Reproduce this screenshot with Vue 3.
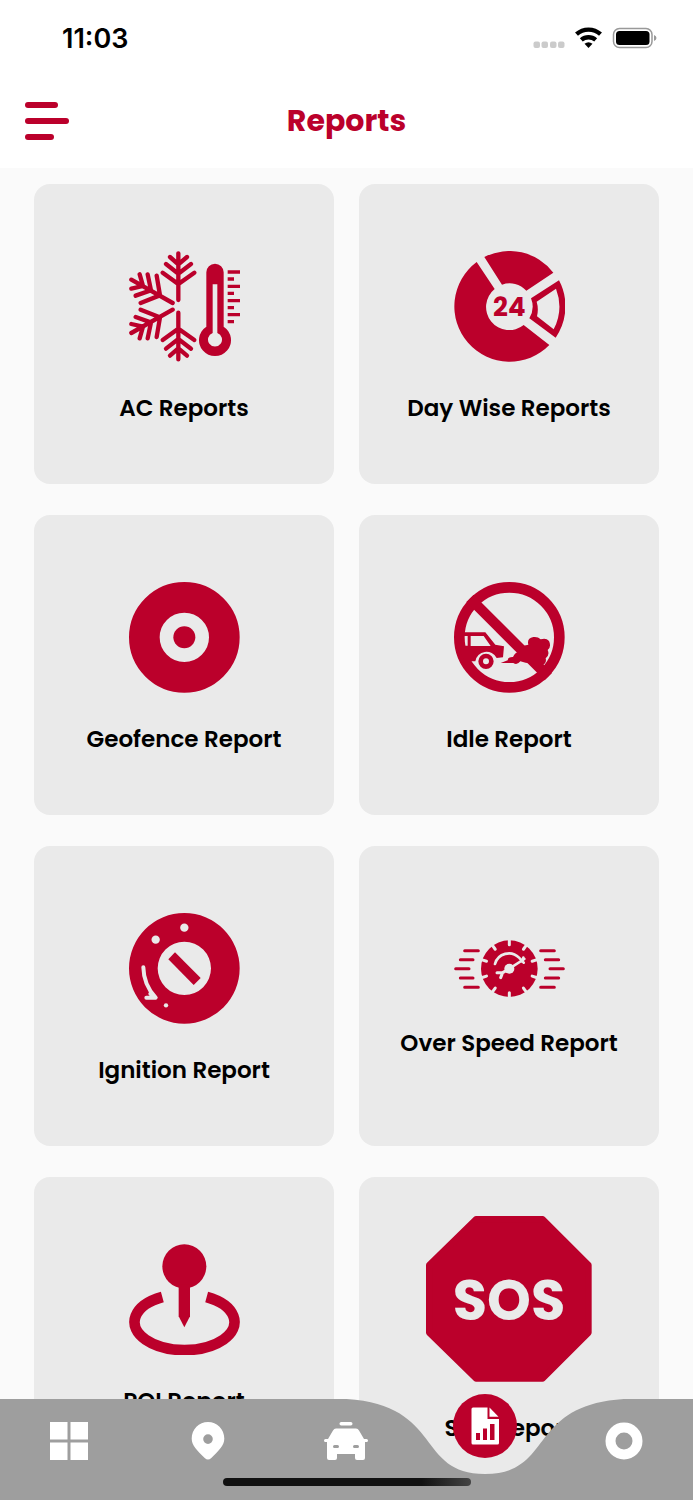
<template>
  <div class="screen">
    <div class="status-bar">
      <span class="status-time">11:03</span>
      <svg class="status-icons" viewBox="0 0 124 24" aria-hidden="true">
        <g fill="#cbcbcb">
          <rect x="0.5" y="15.5" width="6.5" height="6.5" rx="2" />
          <rect x="8.5" y="15.5" width="6.5" height="6.5" rx="2" />
          <rect x="17" y="15.5" width="6.5" height="6.5" rx="2" />
          <rect x="25" y="15.5" width="6.5" height="6.5" rx="2" />
        </g>
        <g fill="none" stroke="#000" stroke-width="4.4">
          <path d="M43.500 8.200A18 18 0 0 1 67.500 8.200" />
          <path d="M48.300 13.900A11 11 0 0 1 62.700 13.900" />
        </g>
        <path d="M51.500 17.800Q55.500 14.600 59.500 17.800L55.500 21.900Z" />
        <rect x="80.500" y="2.500" width="38.500" height="19" rx="6" fill="none" stroke="#999" stroke-width="1.500" />
        <rect x="83" y="5" width="33.500" height="14" rx="3.500" />
        <path d="M121 9Q123.500 10 123.500 12T121 15Z" fill="#999" />
      </svg>
    </div>

    <header class="app-header">
      <button type="button" class="menu-button" aria-label="Menu">
        <span class="menu-line"></span>
        <span class="menu-line menu-line--long"></span>
        <span class="menu-line menu-line--short"></span>
      </button>
      <h1 class="app-title">Reports</h1>
      <span></span>
    </header>

    <main class="report-grid">
      <a
        v-for="report in reports"
        :key="report.id"
        href="#"
        class="report-card"
        @click.prevent
      >
        <svg
          :class="['report-icon', `report-icon--${report.id}`]"
          :viewBox="report.viewBox"
          aria-hidden="true"
        >
          <template v-if="report.id === 'ac'">
            <g fill="none" stroke="#bb002b" stroke-width="13" stroke-linecap="round">
              <g v-for="side in ['', 'translate(0 400) scale(1 -1)']" :key="side" :transform="side">
                <path d="M203 41V181M156 99L203 133L251 99M166 73L203 102L241 73M178 52L203 74L229 52" />
                <path d="M62 120L186 190M138 108L148 167L90 190M111 104L121 152L75 168M87 104L97 139L62 147" />
              </g>
            </g>
            <path
              fill="#bb002b"
              fill-rule="evenodd"
              d="M287 98a26 26 0 0 1 52 0V261a48 48 0 1 1 -52 0ZM306 134V280a21 21 0 1 0 14 0V134Z"
            />
            <path
              stroke="#bb002b"
              stroke-width="10"
              d="M351 97H389M351 140H389M351 183H389M351 225H389M351 118H370M351 161H370M351 204H370M351 246H370"
            />
          </template>

          <template v-else-if="report.id === 'day'">
            <g fill="#bb002b">
              <path d="M148 52A166 166 0 0 1 355 99L274 153A67 67 0 0 0 201 135Z" />
              <path d="M125 67A166 166 0 1 0 343 316L266 256A68 68 0 0 1 179 148Z" />
              <path
                fill-rule="evenodd"
                d="M372 122A166 166 0 0 1 362 294L283 236A68 68 0 0 0 288 176ZM363 147A150 150 0 0 1 356 269L306 230A84 84 0 0 0 305 186Z"
              />
              <text x="223" y="228" text-anchor="middle" class="icon-text icon-text--day">24</text>
            </g>
          </template>

          <template v-else-if="report.id === 'geofence'">
            <circle cx="166" cy="166" r="120" fill="none" stroke="#bb002b" stroke-width="92" />
            <circle cx="166" cy="166" r="33" fill="#bb002b" />
          </template>

          <template v-else-if="report.id === 'idle'">
            <circle cx="223" cy="202" r="150" fill="none" stroke="#bb002b" stroke-width="32" />
            <path d="M105 85L340 320" stroke="#bb002b" stroke-width="31" />
            <g fill="#bb002b">
              <path
                fill-rule="evenodd"
                d="M84 187H151L181 224L207 229L204 262L185 264A34 34 0 0 0 121 274H90L76 245ZM87 198V227H98V198ZM107 198V228H167L146 198Z"
              />
              <path
                fill-rule="evenodd"
                d="M153 251a23 23 0 1 0 0 46a23 23 0 1 0 0 -46M153 265a9 9 0 1 1 0 18a9 9 0 1 1 0 -18"
              />
              <path
                d="M197 279L218 271Q219 260 234 261Q240 248 250 246Q257 227 280 224Q275 204 295 201Q308 199 317 208Q333 202 342 213Q350 230 338 240Q345 255 332 265Q336 280 321 287Q308 290 297 280Q272 281 256 274Q246 287 235 279Z"
              />
            </g>
          </template>

          <template v-else-if="report.id === 'ignition'">
            <path
              fill="#bb002b"
              fill-rule="evenodd"
              d="M221 37a166 166 0 1 0 0 332a166 166 0 1 0 0 -332M221 123a80 80 0 1 1 0 160a80 80 0 1 1 0 -160"
            />
            <path fill="#bb002b" d="M193 155L270 232L249 253L173 176Z" />
            <g fill="#eaeaea">
              <circle cx="221" cy="81" r="12.500" />
              <circle cx="135" cy="117" r="12.500" />
              <circle cx="166" cy="314" r="6.500" />
            </g>
            <path
              d="M98 200Q99 253 135 291H107M135 291L119 279"
              fill="none"
              stroke="#eaeaea"
              stroke-width="12"
              stroke-linecap="round"
              stroke-linejoin="round"
            />
          </template>

          <template v-else-if="report.id === 'speed'">
            <circle cx="223" cy="204" r="85" fill="#bb002b" />
            <g stroke="#eaeaea" stroke-width="9" stroke-linecap="round">
              <path v-for="n in 10" :key="n" d="M223 116V132" :transform="`rotate(${n * 36} 223 204)`" />
            </g>
            <g fill="none" stroke="#eaeaea" stroke-linecap="round" stroke-linejoin="round">
              <path d="M180 190A43 43 0 0 1 252 171" stroke-width="8" />
              <path d="M223 204L268 175M255 174L266 186M263 180L265 171" stroke-width="8" />
              <path d="M222 205L203 216M203 216L186 216M203 216L197 231" stroke-width="9" />
            </g>
            <circle cx="223" cy="204" r="15" fill="#eaeaea" />
            <path
              d="M89 150H130M76 177H114M62 204H102M76 232H114M89 260H130M317 150H358M331 177H371M345 204H385M331 232H371M317 260H358"
              stroke="#bb002b"
              stroke-width="9"
              stroke-linecap="round"
            />
          </template>

          <template v-else-if="report.id === 'poi'">
            <circle cx="221" cy="106" r="66" fill="#bb002b" />
            <path d="M204 160H238V256L221 289L204 256Z" fill="#bb002b" />
            <path
              d="M155 198A150 84 0 1 0 288 198"
              fill="none"
              stroke="#bb002b"
              stroke-width="32"
            />
          </template>

          <template v-else>
            <path
              d="M200 57H400L538 195V398L400 536H200L59 398V195Z"
              fill="#bb002b"
              stroke="#bb002b"
              stroke-width="20"
              stroke-linejoin="round"
            />
            <text x="299" y="359" text-anchor="middle" class="icon-text icon-text--sos">SOS</text>
          </template>
        </svg>
        <span class="report-name">{{ report.name }}</span>
      </a>
    </main>

    <nav class="bottom-nav" aria-label="Main">
      <svg class="nav-shape" viewBox="0 0 693 101" preserveAspectRatio="none" aria-hidden="true">
        <path
          d="M0 0H346.500C443.500 6.250 415.800 75 485 75C554.400 75 526.700 6.250 623.700 0H693V101H0Z"
          fill="#9e9e9e"
        />
      </svg>
      <a href="#" class="nav-link" aria-label="Dashboard">
        <svg class="nav-icon" viewBox="0 0 38 38">
          <path d="M0 0H17.500V17.500H0ZM20.500 0H38V17.500H20.500ZM0 20.500H17.500V38H0ZM20.500 20.500H38V38H20.500Z" />
        </svg>
      </a>
      <a href="#" class="nav-link" aria-label="Map">
        <svg class="nav-icon" viewBox="0 0 38 38">
          <path
            fill-rule="evenodd"
            d="M19 0C10 0 2.700 7.300 2.700 16.500C2.700 24 8 28 15.700 36Q19 39.200 22.300 36C30 28 35.300 24 35.300 16.500C35.300 7.300 28 0 19 0ZM19 12.300a4.800 4.800 0 1 1 0 9.600a4.800 4.800 0 1 1 0 -9.600"
          />
        </svg>
      </a>
      <a href="#" class="nav-link" aria-label="Vehicles">
        <svg class="nav-icon nav-icon--wide" viewBox="0 0 44 38">
          <rect x="15.500" y="0" width="13" height="3.500" rx="1.700" />
          <path
            fill-rule="evenodd"
            d="M12 6.500H32Q34 6.500 35 8.500L40 17H42.500Q44 17 44 18.500T42.500 20H41V36Q41 38 39 38H33Q31 38 31 36V32H13V36Q13 38 11 38H5Q3 38 3 36V20H1.500Q0 20 0 18.500T1.500 17H4L9 8.500Q10 6.500 12 6.500ZM10.500 23a1.500 1.500 0 0 0 0 3H13.500a1.500 1.500 0 0 0 0 -3ZM30.500 23a1.500 1.500 0 0 0 0 3H33.500a1.500 1.500 0 0 0 0 -3Z"
          />
        </svg>
      </a>
      <a href="#" class="nav-link nav-link--active" aria-label="Reports" aria-current="page">
        <svg class="nav-icon" viewBox="0 0 38 38">
          <path
            fill-rule="evenodd"
            d="M7 0.500H21.500V12H33V36Q33 37.500 31.500 37.500H7Q5.500 37.500 5.500 36V2Q5.500 0.500 7 0.500ZM10 26V33H14V26ZM17 21.500V33H21V21.500ZM24 17V33H28.500V17Z"
          />
          <path d="M23.500 0.500V9.700H32.500Z" />
        </svg>
      </a>
      <a href="#" class="nav-link" aria-label="More">
        <svg class="nav-icon" viewBox="0 0 38 38">
          <circle cx="19" cy="19" r="13.500" fill="none" stroke="#fff" stroke-width="10" />
        </svg>
      </a>
      <span class="home-indicator"></span>
    </nav>
  </div>
</template>

<script setup>
const reports = [
  { id: 'ac', name: 'AC Reports', viewBox: '55 34 333 333' },
  { id: 'day', name: 'Day Wise Reports', viewBox: '57 34 333 333' },
  { id: 'geofence', name: 'Geofence Report', viewBox: '0 0 333 333' },
  { id: 'idle', name: 'Idle Report', viewBox: '57 36 333 333' },
  { id: 'ignition', name: 'Ignition Report', viewBox: '55 37 333 333' },
  { id: 'speed', name: 'Over Speed Report', viewBox: '57 118 333 171' },
  { id: 'poi', name: 'POI Report', viewBox: '55 39 333 333' },
  { id: 'sos', name: 'SOS Report', viewBox: '49 47 500 500' }
]
</script>

<style>
body {
  margin: 0;
}
</style>

<style scoped>
.screen {
  position: relative;
  display: flex;
  flex-direction: column;
  height: 100vh;
  overflow: hidden;
  background-color: #fafafa;
  font-family: Poppins, Inter, sans-serif;
}

.status-bar {
  display: flex;
  flex-shrink: 0;
  align-items: center;
  justify-content: space-between;
  height: 76px;
  padding: 0 36px 0 62px;
  background-color: #fff;
}

.status-time {
  font-family: Inter, sans-serif;
  font-size: 27px;
  font-weight: 600;
  color: #000;
}

.status-icons {
  width: 124px;
  height: 24px;
}

.app-header {
  display: grid;
  flex-shrink: 0;
  grid-template-columns: 1fr auto 1fr;
  align-items: center;
  box-sizing: border-box;
  height: 92px;
  padding: 0 25px 2px;
  background-color: #fff;
}

.menu-button {
  display: flex;
  flex-direction: column;
  gap: 10px;
  width: 44px;
  padding: 0;
  border: none;
  background: none;
  cursor: pointer;
}

.menu-line {
  width: 33px;
  height: 6px;
  border-radius: 3px;
  background-color: #bb002b;
}

.menu-line--long {
  width: 44px;
}

.menu-line--short {
  width: 29px;
}

.app-title {
  margin: 0;
  font-size: 30px;
  font-weight: 700;
  line-height: 38px;
  color: #bb002b;
}

.report-grid {
  display: grid;
  grid-template-columns: 1fr 1fr;
  gap: 31px 25px;
  padding: 16px 34px;
}

.report-card {
  display: flex;
  flex-direction: column;
  align-items: center;
  justify-content: center;
  gap: 36px;
  box-sizing: border-box;
  min-width: 0;
  aspect-ratio: 1;
  border-radius: 16px;
  background-color: #eaeaea;
  text-decoration: none;
}

.report-icon {
  flex-shrink: 0;
  width: 37%;
}

.report-icon--sos {
  width: 166px;
}

.icon-text {
  font-family: Poppins, Inter, sans-serif;
  font-weight: 700;
}

.icon-text--day {
  font-size: 78px;
}

.icon-text--sos {
  font-size: 168px;
  fill: #eaeaea;
}

.report-name {
  font-size: 23px;
  font-weight: 600;
  line-height: 20px;
  white-space: nowrap;
  color: #000;
}

.bottom-nav {
  position: absolute;
  right: 0;
  bottom: 0;
  left: 0;
  display: grid;
  grid-template-columns: repeat(5, 1fr);
  align-items: start;
  height: 101px;
}

.nav-shape {
  position: absolute;
  width: 100%;
  height: 100%;
}

.nav-link {
  position: relative;
  display: flex;
  justify-content: center;
  padding-top: 23px;
}

.nav-link--active {
  align-items: center;
  justify-self: center;
  width: 64px;
  height: 64px;
  margin-top: -5px;
  padding-top: 0;
  border-radius: 50%;
  background-color: #bb002b;
}

.nav-icon {
  width: 38px;
  height: 38px;
  fill: #fff;
}

.nav-icon--wide {
  width: 44px;
}

.home-indicator {
  position: absolute;
  bottom: 14px;
  left: 50%;
  width: 248px;
  height: 8px;
  border-radius: 4px;
  background: linear-gradient(90deg, #111 80%, #444);
  transform: translateX(-50%);
}
</style>
